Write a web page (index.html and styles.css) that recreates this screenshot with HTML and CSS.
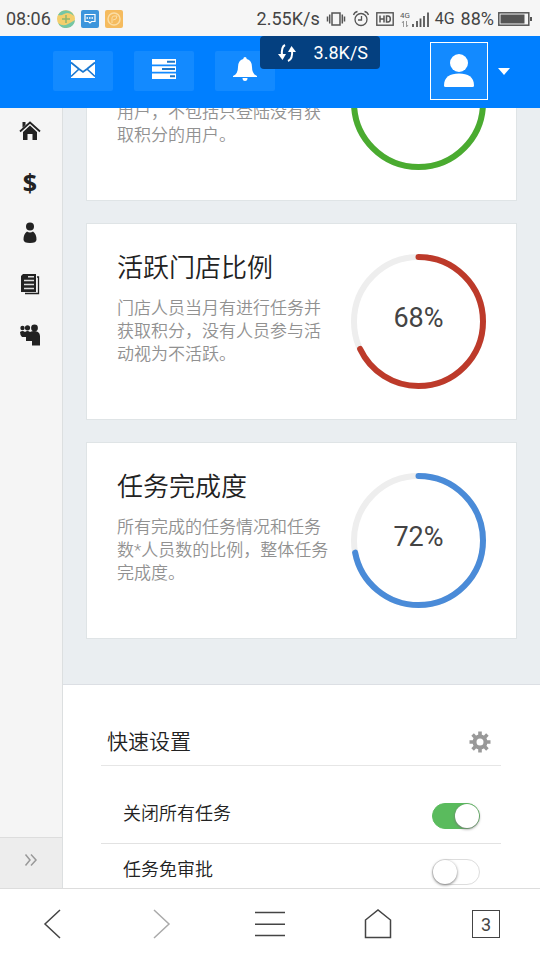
FILE: index.html
```html
<!DOCTYPE html>
<html lang="zh-CN">
<head>
<meta charset="utf-8">
<meta name="viewport" content="width=device-width, initial-scale=1">
<title>任务统计</title>
<link rel="stylesheet" href="styles.css">
</head>
<body>
<div class="app">
  <div class="status">
    <div class="status-left">
      <span>08:06</span>
      <svg width="18" height="18" viewBox="0 0 18 18"><circle cx="9" cy="9" r="9" fill="#f3cf6c"/><path d="M1 5A9 9 0 0 1 17 6Q12 1 7 4Q4 6 1 5zM1 13Q6 17 11 14Q15 12 18 10A9 9 0 0 1 1 13z" fill="#74c6a5"/><path d="M9 5v8M5 9h8" stroke="#91b66c" stroke-width="1.5"/></svg>
      <svg width="18" height="18" viewBox="0 0 18 18"><rect width="18" height="18" rx="2" fill="#3d95dc"/><path d="M4 4.500h10v7h-3.500L9 13l-1.500-1.500H4z" fill="none" stroke="#fff" stroke-width="1.200"/><path d="M5.500 8h7" stroke="#fff" stroke-width="1.500" stroke-dasharray="1.500 1"/></svg>
      <svg width="18" height="18" viewBox="0 0 18 18"><rect width="18" height="18" rx="2" fill="#f5bb5e"/><circle cx="9" cy="9" r="6" fill="none" stroke="#fbdda4" stroke-width="1.500"/><path d="M7 13V8q0-2 2-2h3q0 4-4 4" fill="none" stroke="#fbdda4"/></svg>
    </div>
    <div class="status-right">
      <span>2.55K/s</span>
      <svg width="20" height="16" viewBox="-1 0 20 16" fill="none" stroke="#555" stroke-width="1.500"><rect x="5" y="2" width="8" height="12"/><path d="M2.700 3.500v9M15.300 3.500v9M.5 5.500v5M17.500 5.500v5"/></svg>
      <svg width="18" height="18" viewBox="0 0 18 18" fill="none" stroke="#555" stroke-width="1.300"><circle cx="9" cy="9.500" r="6"/><path d="M9.500 6v4H6M1.500 5q1-3 4-3.500M16.500 5q-1-3-4-3.500"/></svg>
      <svg width="18" height="14" viewBox="0 0 18 14"><rect x=".8" y=".8" width="16.400" height="12.400" fill="none" stroke="#555" stroke-width="1.400"/><path d="M4 3.500v7M8 3.500v7M4 7h4M10.500 4v6h1.500q2.300 0 2.300-3t-2.300-3z" fill="none" stroke="#555" stroke-width="1.500"/></svg>
      <svg width="29" height="20" viewBox="0 0 29 20" fill="none" stroke="#555"><text class="signal-text" x="0" y="9">4G</text><path d="M3.500 18v-6l-1.500 2M6.500 12v6l1.500-2" stroke="#999"/><path d="M13 18v-3M17 18v-6M20.500 18V9.500M24 18V7M28 18V3.500" stroke-width="1.800"/></svg>
      <span class="network">4G</span>
      <span>88%</span>
      <svg class="battery" width="34" height="14" viewBox="0 0 34 14"><rect x=".8" y=".8" width="30" height="12.400" fill="none" stroke="#555" stroke-width="1.500"/><path d="M2.500 2.500h24v9h-24z" fill="#555"/><path d="M32 5h2v4h-2z" fill="#555"/></svg>
    </div>
    <div class="speed">
      <svg width="20" height="18" viewBox="0 0 20 18" fill="none" stroke="#fff" stroke-width="2"><path d="M8 1Q4 3 5 12"/><path d="M1 10l4.500 6L9 10z" fill="#fff" stroke="none"/><path d="M11 17q5-2 4-11"/><path d="M11 8l3.500-6L19 8z" fill="#fff" stroke="none"/></svg>
      <span>3.8K/S</span>
    </div>
  </div>

  <header class="topbar">
    <div class="tools">
      <button class="tool" type="button" aria-label="消息"><svg width="26" height="20" viewBox="0 0 26 20"><path d="M1 1h24v18H1z" fill="#fff"/><path d="M1 3.500l8 6.500 4 3 4-3 8-6.500M1 17.500L9 10M25 17.500L17 10" fill="none" stroke="#1b78d0" stroke-width="1.700"/></svg></button>
      <button class="tool" type="button" aria-label="任务"><svg width="26" height="20" viewBox="0 0 26 20"><path d="M1 0h24v5.500H1zM1 7.200h24v5.500H1zM1 14.400h24V20H1z" fill="#fff"/><path d="M16 2.800h8M11 10h13M19 17.200h5" stroke="#1b76c8" stroke-width="2"/></svg></button>
      <button class="tool" type="button" aria-label="通知"><svg width="26" height="26" viewBox="0 0 26 26" fill="#fff"><path d="M13 1q1.500 0 1.800 2Q20 4.500 20 11q0 7 5 9v1H1v-1q5-2 5-9 0-6.500 5.200-8Q11.500 1 13 1z"/><path d="M10.500 22h5q0 3-2.500 3t-2.500-3z"/></svg></button>
    </div>
    <button class="account" type="button" aria-label="账户">
      <span class="avatar"><svg width="32" height="36" viewBox="0 0 32 36" fill="#fff"><circle cx="16" cy="10" r="9"/><path d="M1 32.500C1 24 7 20.500 16 20.500S31 24 31 32.500q0 1.500-1.500 1.500h-27Q1 34 1 32.500z"/></svg></span>
      <svg width="12" height="7" viewBox="0 0 12 7"><path d="M0 0h12L6 7z" fill="#fff"/></svg>
    </button>
  </header>

  <div class="shell">
    <nav class="sidebar" aria-label="主菜单">
      <div class="menu">
        <a href="#home" aria-label="首页"><svg width="22" height="20" viewBox="0 0 22 20"><path d="M1 10.500L11 1.500l10 9" fill="none" stroke="#222" stroke-width="1.800"/><path d="M3.500 1h3v3l-3 2.800zM11 4.500l7 6.500v8h-4.500v-6h-5v6H4v-8z" fill="#222"/></svg></a>
        <a class="dollar" href="#money" aria-label="积分">$</a>
        <a href="#user" aria-label="用户"><svg width="16" height="22" viewBox="0 0 16 22" fill="#222"><circle cx="8" cy="4.500" r="4"/><path d="M5 9.500q3 2 6 0 3.500 2.500 3.500 8 0 3.500-6.500 3.500t-6.500-3.500q0-5.500 3.500-8z"/></svg></a>
        <a href="#news" aria-label="报表"><svg width="20" height="22" viewBox="0 0 20 22"><path d="M3 1h13v18H1V3z" fill="#222"/><path d="M17 4h1.500v16.500H5" fill="none" stroke="#222" stroke-width="1.300"/><path d="M8 3.800h6M4 7.500h10M4 11.500h10M4 15.500h10" stroke="#ddd" stroke-width="1.500"/></svg></a>
        <a href="#team" aria-label="团队"><svg width="22" height="22" viewBox="0 0 22 22" fill="#222"><circle cx="3.500" cy="4" r="2.200"/><circle cx="8.500" cy="3.800" r="2.600"/><circle cx="15.500" cy="4" r="3.400"/><path d="M1 8q2.500-2 5 0 2.500-2 5 0 4-2 8 0 2 1.500 2 4v9.500h-8V17H7v-4H3q-2-2-2-5z"/></svg></a>
      </div>
      <button class="collapse" type="button" aria-label="展开菜单"><svg width="14" height="14" viewBox="0 0 14 14" fill="none" stroke="#999" stroke-width="1.500"><path d="M1.500 1.500L6 7l-4.500 5.500M7 1.500L12 7l-5 5.500"/></svg></button>
    </nav>

    <main class="content">
      <section class="cards">
        <article class="card">
          <div class="card-text"><h2>活跃用户比例</h2><p>当月有登陆并且获取积分的用户，不包括只登陆没有获取积分的用户。</p></div>
          <div class="chart"><svg viewBox="0 0 135 135"><circle class="track" cx="67.500" cy="67.500" r="64.500"/><circle class="arc green" cx="67.500" cy="67.500" r="64.500" pathLength="100" stroke-dasharray="88 100" transform="rotate(-90 67.500 67.500)"/></svg><span>88%</span></div>
        </article>
        <article class="card">
          <div class="card-text"><h2>活跃门店比例</h2><p>门店人员当月有进行任务并获取积分，没有人员参与活动视为不活跃。</p></div>
          <div class="chart"><svg viewBox="0 0 135 135"><circle class="track" cx="67.500" cy="67.500" r="64.500"/><circle class="arc red" cx="67.500" cy="67.500" r="64.500" pathLength="100" stroke-dasharray="68 100" transform="rotate(-90 67.500 67.500)"/></svg><span>68%</span></div>
        </article>
        <article class="card">
          <div class="card-text"><h2>任务完成度</h2><p>所有完成的任务情况和任务数*人员数的比例，整体任务完成度。</p></div>
          <div class="chart"><svg viewBox="0 0 135 135"><circle class="track" cx="67.500" cy="67.500" r="64.500"/><circle class="arc blue" cx="67.500" cy="67.500" r="64.500" pathLength="100" stroke-dasharray="72 100" transform="rotate(-90 67.500 67.500)"/></svg><span>72%</span></div>
        </article>
      </section>
      <section class="settings">
        <div class="settings-head">
          <h3>快速设置</h3>
          <button class="gear" type="button" aria-label="设置"><svg width="22" height="22" viewBox="0 0 22 22" fill="none" stroke="#999"><circle cx="11" cy="11" r="5.500" stroke-width="4"/><path d="M11 .5v4M11 17.500v4M.5 11h4M17.500 11h4M3.600 3.600l2.800 2.800M15.600 15.600l2.800 2.800M3.600 18.400l2.800-2.800M15.600 6.400l2.800-2.800" stroke-width="3.600"/></svg></button>
        </div>
        <div class="row row-first"><label for="close-all">关闭所有任务</label><input class="switch" id="close-all" type="checkbox" checked></div>
        <div class="row"><label for="no-review">任务免审批</label><input class="switch" id="no-review" type="checkbox"></div>
      </section>
    </main>
  </div>

  <nav class="browser-nav" aria-label="浏览器">
    <button type="button" aria-label="后退"><svg width="30" height="30" viewBox="0 0 30 30"><path d="M21 1L6 15l15 14"/></svg></button>
    <button class="dim" type="button" aria-label="前进"><svg width="30" height="30" viewBox="0 0 30 30"><path d="M7 1l15 14L7 29"/></svg></button>
    <button type="button" aria-label="菜单"><svg width="30" height="30" viewBox="0 0 30 30"><path d="M0 3.500h30M0 15.200h30M0 26.500h30"/></svg></button>
    <button type="button" aria-label="主页"><svg width="30" height="30" viewBox="0 0 30 30"><path d="M2.500 11L15 1l12.500 10v17.500h-25z"/></svg></button>
    <button type="button" aria-label="标签页"><span class="tabs">3</span></button>
  </nav>
</div>
</body>
</html>
```
FILE: styles.css
```css
* { box-sizing: border-box; }

body {
  margin: 0;
  color: #222;
  background: #fff;
  font-family: Roboto, "Noto Sans CJK SC", sans-serif;
}

h2, h3, p { margin: 0; font-weight: 350; }

svg { display: block; flex: none; }

button {
  border: 0;
  padding: 0;
  background: none;
  font: inherit;
  color: inherit;
}

.app {
  display: flex;
  flex-direction: column;
  height: 100vh;
}

/* Phone status bar */
.status {
  position: relative;
  display: flex;
  flex: none;
  align-items: center;
  justify-content: space-between;
  height: 36px;
  padding: 2px 8px 0 6px;
  background: #f6f6f6;
  color: #444;
  font-size: 18px;
  line-height: 34px;
}

.status-left, .status-right { display: flex; align-items: center; gap: 6px; }
.network { font-size: 16px; }
.battery { margin-left: -2px; }
.signal-text { fill: #555; stroke: none; font-size: 8px; }

.speed {
  position: absolute;
  top: 100%;
  right: 160px;
  z-index: 2;
  display: flex;
  align-items: center;
  justify-content: space-between;
  width: 120px;
  height: 33px;
  padding: 0 12px 0 17px;
  border-radius: 4px;
  background: #044080;
  color: #fff;
}

/* Application header */
.topbar {
  display: flex;
  flex: none;
  align-items: center;
  justify-content: space-between;
  height: 72px;
  padding: 0 30px 2px 53px;
  background: #007fff;
}

.tools { display: flex; gap: 21px; }

.tool {
  display: grid;
  place-items: center;
  width: 60px;
  height: 40px;
  padding-bottom: 4px;
  border-radius: 2px;
  background: #138aff;
}

.account { display: flex; align-items: center; gap: 10px; }

.avatar {
  display: grid;
  place-items: center;
  width: 58px;
  height: 58px;
  border: 1px solid #fff;
  background: #138aff;
}

/* Sidebar and page */
.shell { display: flex; flex: 1; min-height: 0; }

.sidebar {
  display: flex;
  flex: none;
  flex-direction: column;
  justify-content: space-between;
  width: 63px;
  border-right: 1px solid #dcdfe0;
  background: #f5f5f5;
}

.menu { display: grid; gap: 5px; }

.menu a {
  display: grid;
  place-items: center;
  height: 46px;
  padding: 0 2px 1px 0;
  color: #222;
  text-decoration: none;
}

.menu .dollar { font: 700 25px/42px "Noto Sans", sans-serif; }

.collapse {
  display: grid;
  place-items: center;
  height: 51px;
  padding-bottom: 6px;
  border-top: 1px solid #ddd;
  background: #ededed;
}

.content {
  display: flex;
  flex: 1;
  flex-direction: column;
  justify-content: flex-end;
  min-width: 0;
  overflow: hidden;
  background: #eaeef1;
}

.cards {
  display: grid;
  flex: none;
  gap: 22px;
  padding: 0 23px 45px;
}

.card {
  display: flex;
  gap: 18px;
  padding: 30px;
  border: 1px solid #dfe4e6;
  background: #fff;
}

.card-text { flex: 1; }

.card h2 {
  margin-bottom: 15px;
  font-size: 26px;
  line-height: 28px;
}

.card p {
  color: #919191;
  font-size: 17px;
  line-height: 23px;
}

.chart {
  display: grid;
  flex: none;
  width: 135px;
  height: 135px;
}

.chart svg, .chart span { grid-area: 1 / 1; }

.chart span {
  color: #444;
  font-size: 27px;
  line-height: 128px;
  text-align: center;
}

.track, .arc { fill: none; stroke-width: 6; }
.track { stroke: #eee; }
.arc { stroke-linecap: round; }
.green { stroke: #4aab30; }
.red { stroke: #bd3a2a; }
.blue { stroke: #4a8bd8; }

/* Quick settings */
.settings {
  flex: none;
  padding: 34px 39px 3px 38px;
  border-top: 1px solid #dcdfe4;
  background: #fff;
}

.settings-head {
  display: flex;
  align-items: center;
  justify-content: space-between;
  height: 47px;
  padding: 0 10px 0 6px;
  border-bottom: 1px solid #e6e6e6;
}

.settings-head h3 { font-size: 21px; line-height: 46px; }

.row {
  display: flex;
  align-items: center;
  justify-content: space-between;
  padding: 15px 21px 0 22px;
}

.row-first {
  padding-top: 37px;
  padding-bottom: 14px;
  border-bottom: 1px solid #e2e2e2;
}

.row label {
  padding-bottom: 4px;
  font-size: 18px;
  font-weight: 350;
  line-height: 22px;
}

.switch {
  display: flex;
  width: 48px;
  height: 26px;
  margin: 0;
  padding: 1px;
  border: 1px solid #ddd;
  border-radius: 13px;
  appearance: none;
  background: #fff;
}

.switch::before {
  content: "";
  width: 24px;
  height: 24px;
  margin: -1px;
  border-radius: 50%;
  background: #fff;
  box-shadow: 0 1px 3px #777;
}

.switch:checked {
  justify-content: flex-end;
  border-color: #5abb5d;
  background: #5abb5d;
}

/* Browser toolbar */
.browser-nav {
  display: grid;
  flex: none;
  grid-template-columns: repeat(5, 1fr);
  height: 72px;
  padding-bottom: 2px;
  border-top: 1px solid #ddd;
  background: #fff;
}

.browser-nav button { display: grid; place-items: center; }
.browser-nav svg { fill: none; stroke: #444; stroke-width: 1.500; }
.browser-nav .dim svg { stroke: #aaa; }

.tabs {
  width: 28px;
  height: 28px;
  border: 1px solid #444;
  color: #444;
  font-size: 18px;
  line-height: 28px;
  text-align: center;
}
```
